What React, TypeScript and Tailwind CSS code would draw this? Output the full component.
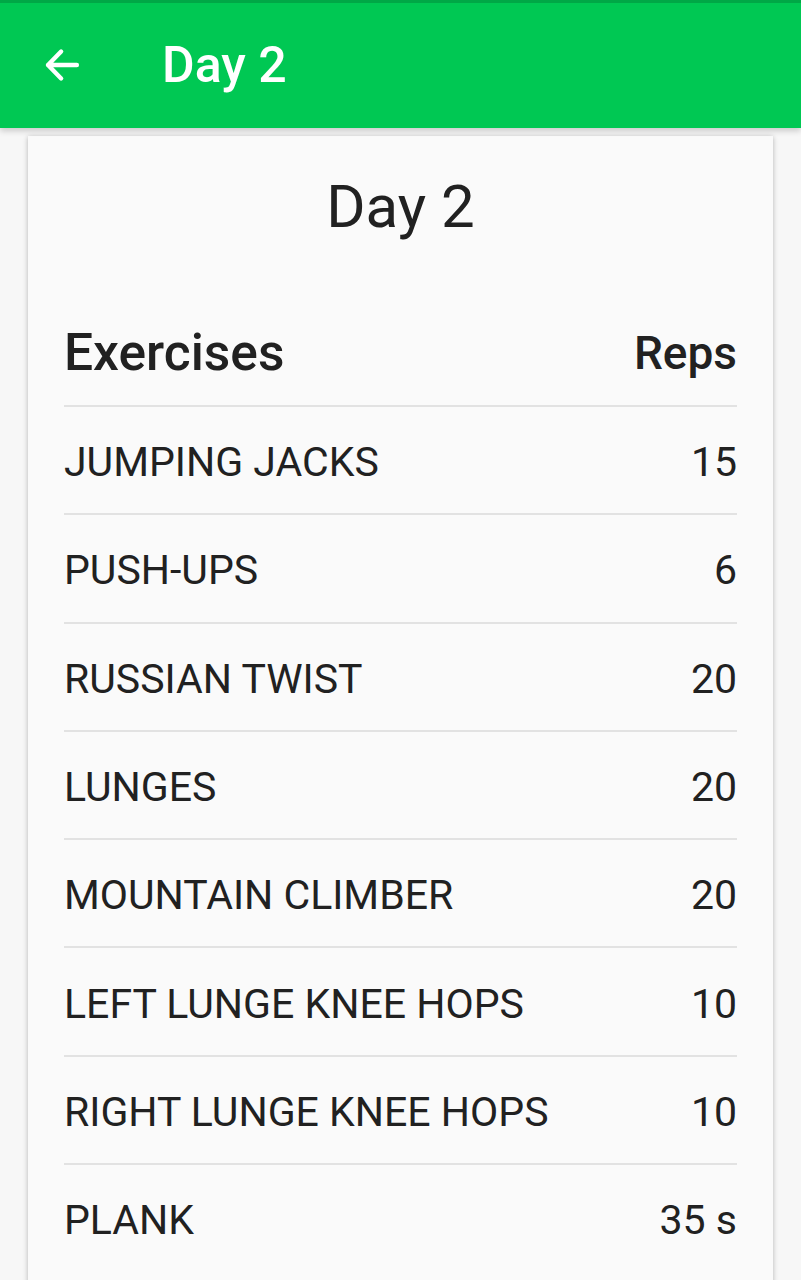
import React from 'react';

const exercises: [string, string][] = [
  ['JUMPING JACKS', '15'],
  ['PUSH-UPS', '6'],
  ['RUSSIAN TWIST', '20'],
  ['LUNGES', '20'],
  ['MOUNTAIN CLIMBER', '20'],
  ['LEFT LUNGE KNEE HOPS', '10'],
  ['RIGHT LUNGE KNEE HOPS', '10'],
  ['PLANK', '35 s'],
];

const App = () => {
  return (
    <div className="h-[1280px] overflow-hidden bg-[#f7f7f7] font-['Roboto',sans-serif] text-[#212121]">
      {/* App bar */}
      <header className="relative z-10 h-[128px] border-t-[3px] border-[#00a846] bg-[#00c853] shadow-[0_3px_6px_rgba(0,0,0,0.18)] flex items-start">
        <div className="flex items-center pt-[27px]">
          <button className="w-[124px] h-[70px] flex items-center justify-center text-white">
            <svg width="42" height="42" viewBox="0 0 24 24" fill="none" stroke="currentColor" strokeWidth="2.5" strokeLinecap="round" strokeLinejoin="round">
              <path d="M20.5 12H4M11.5 4.3L4 12l7.5 7.7" />
            </svg>
          </button>
          <h1 className="ml-[38px] text-[50px] font-medium leading-none text-white">Day 2</h1>
        </div>
      </header>

      {/* Card */}
      <main className="px-[28px] pt-[8px]">
        <div className="bg-[#fafafa] shadow-[0_1px_5px_rgba(0,0,0,0.28)] px-[36px] pt-[41px] pb-10">
          <h2 className="text-center text-[60px] leading-none">Day 2</h2>

          <div className="mt-[60px] h-[108px] pt-[4px] flex items-center justify-between">
            <span className="text-[51.5px] font-medium leading-none">Exercises</span>
            <span className="text-[46px] font-medium leading-none">Reps</span>
          </div>

          {exercises.map(([name, reps]) => (
            <div key={name} className="h-[108.3px] pt-[5px] border-t-2 border-[#e2e2e2] flex items-center justify-between">
              <span className="text-[41px] leading-none">{name}</span>
              <span className="text-[41px] leading-none">{reps}</span>
            </div>
          ))}
        </div>
      </main>
    </div>
  );
};

export default App;
